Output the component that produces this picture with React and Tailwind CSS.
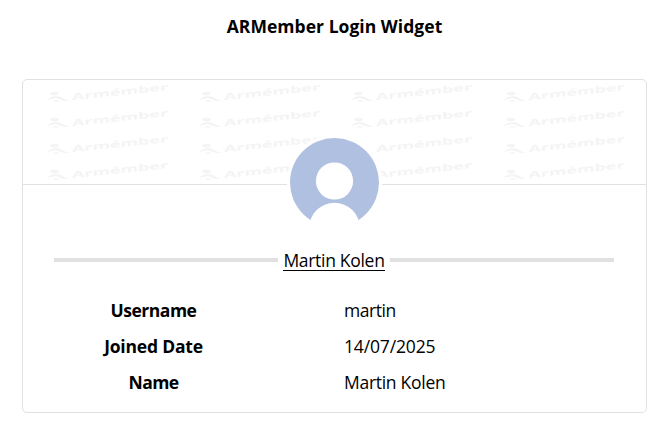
const columns = [24, 176, 328, 480.5];
const rows = [3, 29, 55, 81];

function Mark({ x, y }) {
  return (
    <g transform={`translate(${x} ${y})`} fill="#f4f4f4">
      <ellipse cx="7.5" cy="10.6" rx="4.2" ry="1.8" />
      <path d="M0 17.4C2 13 11 12 15 14.6C17 16 19 17.2 22 18C15 19.4 13 15 7 15.4C4 15.6 2 16.4 0 17.4Z" />
      <path d="M5 18.6C8 16.4 12 17 13 19C10 18.4 8 18.6 5 18.6Z" />
      <text
        transform="matrix(1 -0.105 0 1 25 17.2)"
        fontSize="9.4"
        fontWeight="700"
        textLength="96"
        lengthAdjust="spacingAndGlyphs"
        className="font-['Open_Sans',sans-serif]"
      >
        Armémber
      </text>
    </g>
  );
}

function Avatar() {
  return (
    <svg className="block h-[95px] w-[95px]" viewBox="0 0 95 95">
      <circle cx="47.5" cy="47.5" r="47.5" fill="#fff" />
      <circle cx="47.5" cy="47.5" r="44.5" fill="#b0c0e0" />
      <circle cx="47.5" cy="46" r="18.6" fill="#fff" />
      <circle cx="47.5" cy="93" r="25.3" fill="#fff" />
    </svg>
  );
}

function Row({ label, value, labelClass, valueClass }) {
  return (
    <div className="flex h-9 items-center leading-9">
      <div className="flex w-[261px] justify-center font-bold">
        <span className={labelClass}>{label}</span>
      </div>
      <div className="pl-[60px]">
        <span className={valueClass}>{value}</span>
      </div>
    </div>
  );
}

export default function App() {
  return (
    <div className="h-[434px] w-[671px] overflow-hidden bg-white pt-[13px] pl-[22px] font-['Open_Sans','Noto_Sans',sans-serif] text-[17.5px] text-black">
      <h1 className="w-[625px] text-center leading-[26px] font-bold">
        <span className="tracking-[0.04px]">ARMember Login Widget</span>
      </h1>
      <div className="mt-10 h-[334px] w-[625px] rounded-[5px] border border-[#e1e1e1]">
        <div className="h-[105px] border-b border-[#e1e1e1]">
          <svg className="block h-[104px] w-[623px]" viewBox="0 0 623 104">
            {rows.map((y) => columns.map((x) => <Mark key={`${x}-${y}`} x={x} y={y} />))}
          </svg>
        </div>
        <div className="relative -mt-[50px] flex justify-center">
          <Avatar />
        </div>
        <div className="mx-[31px] mt-[15px] flex h-[30px] items-center">
          <div className="h-1 w-[224px] bg-[#e1e1e1]" />
          <div className="flex w-[112px] justify-center">
            <a className="border-b border-black pt-[2px] leading-[19px] whitespace-nowrap tracking-[-0.3px]">Martin Kolen</a>
          </div>
          <div className="h-1 w-[224px] bg-[#e1e1e1]" />
        </div>
        <div className="mt-[17px]">
          <Row label="Username" value="martin" labelClass="tracking-[-0.5px]" valueClass="tracking-[-0.45px]" />
          <Row label="Joined Date" value="14/07/2025" labelClass="tracking-[-0.2px]" valueClass="tracking-[-0.15px]" />
          <Row label="Name" value="Martin Kolen" labelClass="tracking-[-0.6px]" valueClass="tracking-[-0.28px]" />
        </div>
      </div>
    </div>
  );
}
